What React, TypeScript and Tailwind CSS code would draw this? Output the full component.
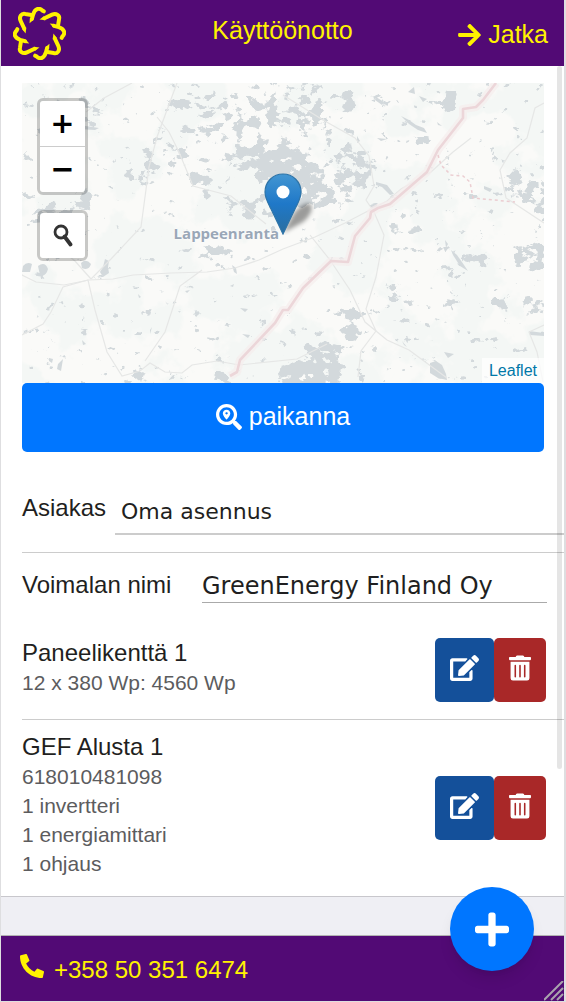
import {
  FaArrowRight,
  FaEdit,
  FaPhoneAlt,
  FaPlus,
  FaSearchLocation,
  FaTrashAlt,
} from "react-icons/fa";

const units = [
  {
    title: "Paneelikenttä 1",
    lines: ["12 x 380 Wp: 4560 Wp"],
  },
  {
    title: "GEF Alusta 1",
    lines: ["618010481098", "1 invertteri", "1 energiamittari", "1 ohjaus"],
  },
];

// Lake density blobs: cx, cy, rx, ry, opacity
const lakes = [
  [270, 157, 42, 13, 1],
  [292, 172, 36, 13, 0.9],
  [257, 112, 8, 24, 0.85],
  [200, 106, 42, 9, 0.63],
  [222, 128, 40, 10, 0.58],
  [300, 110, 34, 26, 0.52],
  [345, 104, 8, 14, 0.7],
  [312, 194, 40, 12, 0.8],
  [354, 168, 22, 24, 0.62],
  [206, 180, 18, 9, 0.7],
  [250, 205, 22, 14, 0.58],
  [142, 175, 14, 10, 0.6],
  [87, 203, 7, 16, 0.95],
  [52, 212, 26, 10, 0.6],
  [215, 254, 22, 10, 0.6],
  [450, 103, 8, 14, 1],
  [380, 102, 12, 8, 0.45],
  [418, 142, 8, 7, 0.7],
  [522, 186, 20, 16, 0.62],
  [542, 200, 8, 20, 1],
  [532, 255, 16, 16, 0.72],
  [352, 326, 9, 22, 0.9],
  [322, 352, 18, 14, 0.85],
  [310, 376, 34, 16, 1],
  [395, 302, 20, 9, 0.48],
  [457, 300, 5, 12, 0.7],
  [498, 304, 9, 9, 0.75],
  [534, 305, 12, 12, 0.58],
  [223, 373, 6, 12, 1],
  [140, 377, 16, 7, 0.7],
  [470, 262, 26, 16, 0.38],
  [400, 224, 22, 8, 0.42],
  [72, 110, 34, 14, 0.42],
  [165, 160, 30, 20, 0.38],
];

function Logo() {
  return (
    <svg
      viewBox="-80 -80 160 160"
      className="h-[53px] w-[53px]"
      fill="none"
      stroke="#fff200"
      strokeWidth="12"
      strokeLinecap="round"
      strokeLinejoin="round"
      aria-label="GreenEnergy"
    >
      {[0, 90, 180, 270].map((angle) => (
        <g key={angle} transform={`rotate(${angle})`}>
          <path d="M15 -46 L38 -57 C51 -63 62 -54 59 -43 L56 -24" />
          <path d="M44 -23 L58 -19 C74 -14 80 -2 69 9 L67 13" />
          <path d="M0 -42 L13 -52 L18 -40 Z" fill="#fff200" stroke="none" />
          <path d="M31 -30 L46 -29 L42 -17 Z" fill="#fff200" stroke="none" />
        </g>
      ))}
    </svg>
  );
}

function MapTiles() {
  return (
    <svg
      className="absolute inset-0 h-full w-full"
      viewBox="22 83 522 300"
      preserveAspectRatio="xMidYMid slice"
      aria-hidden="true"
    >
      <defs>
        <filter
          id="forest"
          x="0"
          y="0"
          width="1"
          height="1"
          colorInterpolationFilters="sRGB"
        >
          <feTurbulence type="fractalNoise" baseFrequency="0.018" numOctaves="5" seed="4" />
          <feColorMatrix values="0 0 0 0 0.957  0 0 0 0 0.969  0 0 0 0 0.961  14 0 0 0 -6.4" />
        </filter>
        <filter
          id="water"
          filterUnits="userSpaceOnUse"
          x="22"
          y="83"
          width="522"
          height="300"
          colorInterpolationFilters="sRGB"
        >
          <feGaussianBlur in="SourceGraphic" stdDeviation="4" result="density" />
          <feTurbulence type="fractalNoise" baseFrequency="0.09 0.11" numOctaves="4" seed="11" />
          <feColorMatrix values="0 0 0 0 0  0 0 0 0 0  0 0 0 0 0  1 0 0 0 0" result="noise" />
          <feComposite
            in="density"
            in2="noise"
            operator="arithmetic"
            k2="0.42"
            k3="1"
            k4="-0.72"
          />
          <feColorMatrix values="0 0 0 0 0.827  0 0 0 0 0.851  0 0 0 0 0.863  0 0 0 18 0" />
        </filter>
      </defs>
      <rect x="22" y="83" width="522" height="300" fill="#fafaf8" />
      <rect x="22" y="83" width="522" height="300" filter="url(#forest)" />
      <g filter="url(#water)">
        {lakes.map(([cx, cy, rx, ry, opacity]) => (
          <ellipse
            key={`${cx}-${cy}`}
            cx={cx}
            cy={cy}
            rx={rx}
            ry={ry}
            fill="#000"
            fillOpacity={opacity}
          />
        ))}
      </g>
      <g fill="#d3d9dc">
        <path d="M401 116l8 4 7 5 8 3 3 5-9-3-9-6z" />
        <path d="M376 182l11 3 7 9-4 1-8-8-6-2z" />
        <path d="M451 250l6 5 7 10 4 6-8-5-7-11z" />
        <path d="M23 266q4-5 9-2l-2 8-8 0zM38 266q7-5 10 3-2 8-8 6zM81 263q5-5 10 1-2 7-9 4z" />
        <path d="M105 259l4 2-1 6 1 6-6 4-3-5 3-5z" />
        <path d="M58 364l5-5-2 12-4-2zM49 358l4 1-1 4-3-2z" />
        <path d="M72 122l7 3 20 3-4 2-17-1z" />
        <path d="M430 363l6-2 6 4 4 9 1 6-9-2-8-5z" />
        <path d="M232 265l4 3 1 6-3-2zM230 286l4-2-1 3zM240 308l8 1-3 3zM242 334l8 1-2 3zM185 291l5-1-3 3zM138 294l3 3-2 1zM82 340l4 4-3 1zM150 330l2-3-2 7z" />
        <path d="M376 97l8 5-2 3-7-5zM408 92l6-5 1 7zM419 96l8 3-4 3zM357 136l3 5-3 2zM377 138l10 1-6 2zM484 186l8 3-2 3-6-3zM437 122l5 4-4-1zM445 240l3 4-2 4zM402 341l5 6-3-2zM444 352l10 2-6 4zM529 331l15 2v3l-14-1z" />
      </g>
      <g fill="none" stroke="#e6e7e6" strokeWidth="1.2">
        <path d="M22 275l14 7 28 3 25-5 24-1 20-4 38-2 36-1 28-4 24-8 24-11 32-12 30-14 42-22 14-12 30-17 22-20 18-14" />
        <path d="M22 335l21-11 8-12 12-25 25-7 7 30 12 42 15 24 18-5 10-8 15 9 17 1 10-8 25-4 22 4 58-6 30-15" />
        <path d="M86 112l18-14 28-15M60 249l15 12 16 18M91 279l20-20 30-32 8-60 8-30 20-54" />
        <path d="M157 117l12 15 10 20 14 34 38 10 35 28" />
        <path d="M145 361l20-29 15-46 22-16" />
        <path d="M283 95l40 25 32 18 14 18 5 30-8 14 8 12 10 23-8 42-10 32 10 22-15 20-3 26" />
        <path d="M310 235l20 25 20 30 15 32 22 18 22 10 38 28" />
        <path d="M544 103l-9 5-8 30-17 15-10 17 6 28 38 25M544 325l-15 7 8 20 6 30" />
      </g>
      <path
        d="M496 83L483 100 476 107 463 109V118L438 150 427 172 390 204 378 208 371 212 370 218 355 236 348 262 331 261 303 288 288 310 283 310 275 323 240 360 237 372 230 376"
        fill="none"
        stroke="#f5eded"
        strokeWidth="8"
        strokeLinejoin="round"
        strokeOpacity="0.7"
      />
      <path
        d="M496 83L483 100 476 107 463 109V118L438 150 427 172 390 204 378 208 371 212 370 218 355 236 348 262 331 261 303 288 288 310 283 310 275 323 240 360 237 372 230 376"
        fill="none"
        stroke="#ecd6d9"
        strokeWidth="2.6"
        strokeLinejoin="round"
      />
      <path
        d="M438 155L441 165 451 175 463 176 470 182 473 198 515 202"
        fill="none"
        stroke="#ebcdd1"
        strokeWidth="1.5"
        strokeDasharray="3 3"
      />
    </svg>
  );
}

function Marker() {
  return (
    <svg
      className="absolute top-[90px] left-1/2 -ml-[19px] h-[62px] w-[62px]"
      viewBox="0 0 62 62"
      role="img"
      aria-label="Sijainti"
    >
      <defs>
        <linearGradient id="pin" x1="0" y1="0" x2="0" y2="1">
          <stop offset="0" stopColor="#4396d2" />
          <stop offset="0.5" stopColor="#1f78c8" />
          <stop offset="1" stopColor="#2a6e9f" />
        </linearGradient>
        <filter id="soft" x="-20%" y="-20%" width="140%" height="140%">
          <feGaussianBlur stdDeviation="2" />
        </filter>
      </defs>
      <path
        d="M19 60 L30 40 Q40 28 47 31 Q50 40 39 49 Z"
        fill="#000"
        fillOpacity="0.38"
        filter="url(#soft)"
      />
      <path
        d="M19 1 C9 1 1 9 1 19 C1 25 4 30 7 36 L19 61 L31 36 C34 30 37 25 37 19 C37 9 29 1 19 1 Z"
        fill="url(#pin)"
        stroke="#2e74a8"
        strokeWidth="1.2"
      />
      <circle cx="19" cy="19" r="6.5" fill="#fff" />
    </svg>
  );
}

function MapView() {
  return (
    <div className="relative h-[300px] overflow-hidden bg-[#fafaf8]">
      <MapTiles />
      <span className="absolute top-1/2 right-1/2 mr-1 -translate-y-1/2 font-['Open_Sans'] text-[15px] leading-5 font-bold text-[#9aa7b7] [text-shadow:0_0_2px_#fff,0_0_2px_#fff]">
        Lappeenranta
      </span>
      <Marker />
      <div className="absolute top-[15px] left-[15px] flex flex-col gap-[15px]">
        <div className="rounded-md border-3 border-black/20 bg-clip-padding font-['DejaVu_Sans'] text-[29px] font-bold text-black">
          <button
            type="button"
            aria-label="Lähennä"
            className="block h-[46px] w-[45px] rounded-t-sm border-b border-[#ccc] bg-white leading-[45px]"
          >
            +
          </button>
          <button
            type="button"
            aria-label="Loitonna"
            className="block h-[45px] w-[45px] rounded-b-sm bg-white leading-[45px]"
          >
            −
          </button>
        </div>
        <div className="rounded-md border-3 border-black/20 bg-clip-padding">
          <button
            type="button"
            aria-label="Hae osoite"
            className="flex h-[45px] w-[45px] items-center justify-center rounded-sm bg-white"
          >
            <svg viewBox="0 0 20 24" className="h-6 w-5" fill="none" stroke="#333">
              <circle cx="8" cy="8" r="6" strokeWidth="2.8" />
              <path d="M11.5 12.5 L17.5 20.5" strokeWidth="3.8" strokeLinecap="round" />
            </svg>
          </button>
        </div>
      </div>
      <div className="absolute right-0 bottom-0 bg-white/70 px-[7px] text-base leading-[25px]">
        <a href="#leaflet" className="text-[#0078a8]">
          Leaflet
        </a>
      </div>
    </div>
  );
}

export default function App() {
  return (
    <div className="relative flex min-h-screen flex-col border-r-2 border-b border-l border-[#dedee0] bg-[#efeff4] font-['Liberation_Sans',sans-serif] text-[#1f1f21]">
      <header className="grid h-[66px] grid-cols-[1fr_auto_1fr] items-center bg-[#520a75] px-3 text-[#fff200]">
        <Logo />
        <h1 className="pb-1 text-[25px]">Käyttöönotto</h1>
        <button type="button" className="mr-1 flex items-center gap-[7px] justify-self-end pt-1 text-[25px]">
          <FaArrowRight className="h-[26px] w-[23px]" />
          Jatka
        </button>
      </header>

      <main className="border-b border-[#c8c7cc] bg-white pt-[17px] pl-[21px]">
        <div className="mr-5">
          <MapView />
          <button
            type="button"
            className="flex h-[69px] w-full items-center justify-center gap-[7px] rounded-[5px] bg-[#0076ff] pb-0.5 text-[25px] text-white"
          >
            <FaSearchLocation className="h-[26px] w-[26px]" />
            <span>paikanna</span>
          </button>
        </div>

        <div className="flex items-end gap-[9px] border-b border-[#ccc] pt-8 pb-[17px] text-2xl">
          <label htmlFor="customer" className="pb-[11px]">
            Asiakas
          </label>
          <select
            id="customer"
            className="h-[51px] flex-1 appearance-none rounded-none border-b-2 border-[#ccc] bg-transparent px-1.5 pt-1.5 font-['DejaVu_Sans',sans-serif] text-[22px] outline-none"
          >
            <option>Oma asennus</option>
          </select>
        </div>

        <div className="flex h-[68px] items-center pr-[17px] text-2xl">
          <label htmlFor="plant" className="w-[180px] shrink-0 pb-1">
            Voimalan nimi
          </label>
          <input
            id="plant"
            type="text"
            defaultValue="GreenEnergy Finland Oy"
            className="mb-1 h-9 min-w-0 flex-1 border-b border-[#aaa] pt-0.5 font-['DejaVu_Sans',sans-serif] outline-none"
          />
        </div>

        <ul className="divide-y divide-[#ccc]">
          {units.map((unit) => (
            <li
              key={unit.title}
              className="flex min-h-[99px] items-center justify-between pt-3 pb-[13px] pr-[18px]"
            >
              <div className="pb-[5px]">
                <h2 className="text-2xl leading-[30px]">{unit.title}</h2>
                {unit.lines.map((line) => (
                  <p key={line} className="text-[21px] leading-[29px] text-[#5c5c5e]">
                    {line}
                  </p>
                ))}
              </div>
              <div className="flex text-white">
                <button
                  type="button"
                  aria-label="Muokkaa"
                  className="h-16 rounded-[5px] bg-[#14509a] px-[15px] pb-1"
                >
                  <FaEdit className="h-[26px] w-[29px]" />
                </button>
                <button
                  type="button"
                  aria-label="Poista"
                  className="h-16 rounded-[5px] bg-[#a92828] px-[15px] pb-1"
                >
                  <FaTrashAlt className="h-[26px] w-[22px]" />
                </button>
              </div>
            </li>
          ))}
        </ul>
      </main>

      <footer className="relative mt-auto flex h-[66px] items-center border-t border-[#b2b2b2] bg-[#520a75] px-[19px] text-[#fff200]">
        <a href="tel:+358503516474" className="flex items-center gap-2.5 pt-0.5 text-2xl">
          <FaPhoneAlt className="mb-2 h-6 w-6" />
          +358 50 351 6474
        </a>
        <svg
          className="absolute right-0 bottom-0 h-5 w-5"
          viewBox="0 0 20 20"
          stroke="#a9a3ad"
          strokeWidth="2"
          aria-hidden="true"
        >
          <path d="M0 19 L19 0 M7 19 L19 7 M13 19 L19 13" />
        </svg>
      </footer>

      <button
        type="button"
        aria-label="Lisää"
        className="absolute right-[30px] bottom-[30px] flex h-[84px] w-[84px] items-center justify-center rounded-full bg-[#0076ff] text-white shadow-lg"
      >
        <FaPlus className="h-[39px] w-[34px]" />
      </button>

      {/* Scroll indicator */}
      <div className="pointer-events-none absolute top-[66px] right-0.5 h-[703px] w-[5px] rounded-full bg-black/10" />
    </div>
  );
}
